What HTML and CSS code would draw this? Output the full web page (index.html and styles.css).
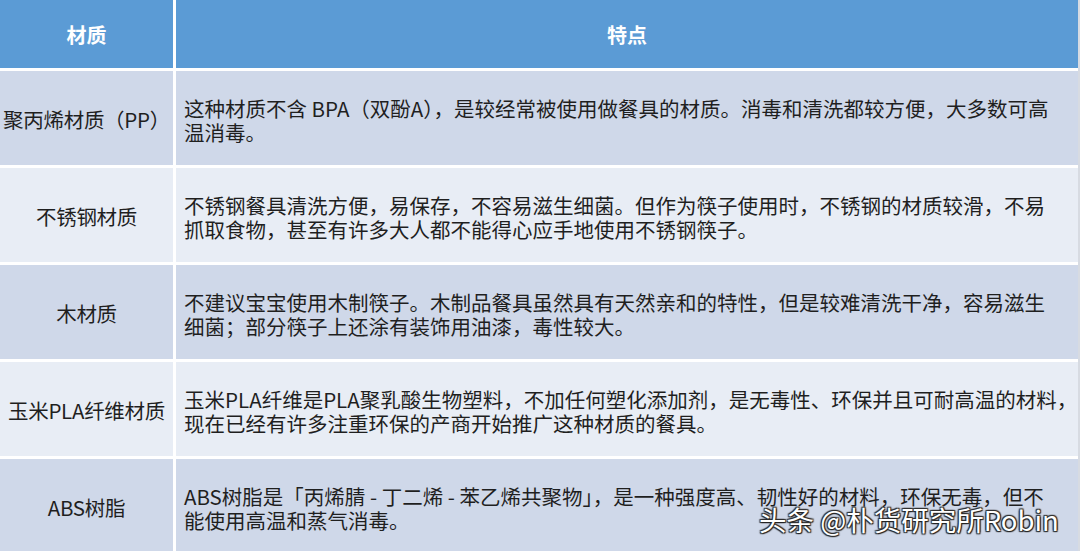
FILE: index.html
```html
<!DOCTYPE html>
<html lang="zh-CN">
<head>
<meta charset="utf-8">
<link rel="stylesheet" href="styles.css">
</head>
<body>
<div class="page">
  <div class="table">
    <div class="cell head">材质</div>
    <div class="cell head">特点</div>

    <div class="cell name odd">聚丙烯材质（PP）</div>
    <div class="cell desc odd">这种材质不含 BPA（双酚A），是较经常被使用做餐具的材质。消毒和清洗都较方便，大多数可高<br>温消毒。</div>

    <div class="cell name even">不锈钢材质</div>
    <div class="cell desc even">不锈钢餐具清洗方便，易保存，不容易滋生细菌。但作为筷子使用时，不锈钢的材质较滑，不易<br>抓取食物，甚至有许多大人都不能得心应手地使用不锈钢筷子。</div>

    <div class="cell name odd">木材质</div>
    <div class="cell desc odd">不建议宝宝使用木制筷子。木制品餐具虽然具有天然亲和的特性，但是较难清洗干净，容易滋生<br>细菌；部分筷子上还涂有装饰用油漆，毒性较大。</div>

    <div class="cell name even">玉米PLA纤维材质</div>
    <div class="cell desc even">玉米PLA纤维是PLA聚乳酸生物塑料，不加任何塑化添加剂，是无毒性、环保并且可耐高温的材料，<br>现在已经有许多注重环保的产商开始推广这种材质的餐具。</div>

    <div class="cell name odd">ABS树脂</div>
    <div class="cell desc odd">ABS树脂是「丙烯腈 - 丁二烯 - 苯乙烯共聚物」，是一种强度高、韧性好的材料，环保无毒，但不<br>能使用高温和蒸气消毒。</div>
  </div>
  <div class="watermark">头条 @朴货研究所Robin</div>
</div>
</body>
</html>
```

FILE: styles.css
```css
html, body {
  margin: 0;
  padding: 0;
  background: #ffffff;
  overflow: hidden;
}

.page {
  position: relative;
  width: 1080px;
  height: 551px;
  overflow: hidden;
  font-family: "Noto Sans CJK SC", "Noto Sans", sans-serif;
}

.table {
  display: grid;
  grid-template-columns: 173px 902px;
  grid-template-rows: 68px repeat(5, 94px);
  gap: 3px;
  background: #ffffff;
  width: 1078px;
  border-right: 2px solid #d7dbe2;
}

.cell {
  display: flex;
  align-items: center;
  color: #1f1f1f;
  font-size: 20.5px;
  line-height: 24px;
}

.head {
  background: #5b9bd5;
  color: #ffffff;
  font-weight: bold;
  font-size: 20px;
  justify-content: center;
  padding-top: 2px;
}

.name {
  justify-content: center;
  text-align: center;
  white-space: nowrap;
  padding-top: 2px;
  letter-spacing: -0.3px;
}

.desc {
  padding: 3px 0 0 8px;
  white-space: nowrap;
}

.odd {
  background: #cfd8e9;
}

.even {
  background: #e8edf5;
}

.watermark {
  position: absolute;
  left: 759px;
  top: 502px;
  font-size: 27.5px;
  line-height: 34px;
  color: #ffffff;
  white-space: nowrap;
  text-shadow: 0 0 2px #222, 1px 1px 1px #222, -1px -1px 1px #333, 1px -1px 1px #333, -1px 1px 1px #333;
}
```
